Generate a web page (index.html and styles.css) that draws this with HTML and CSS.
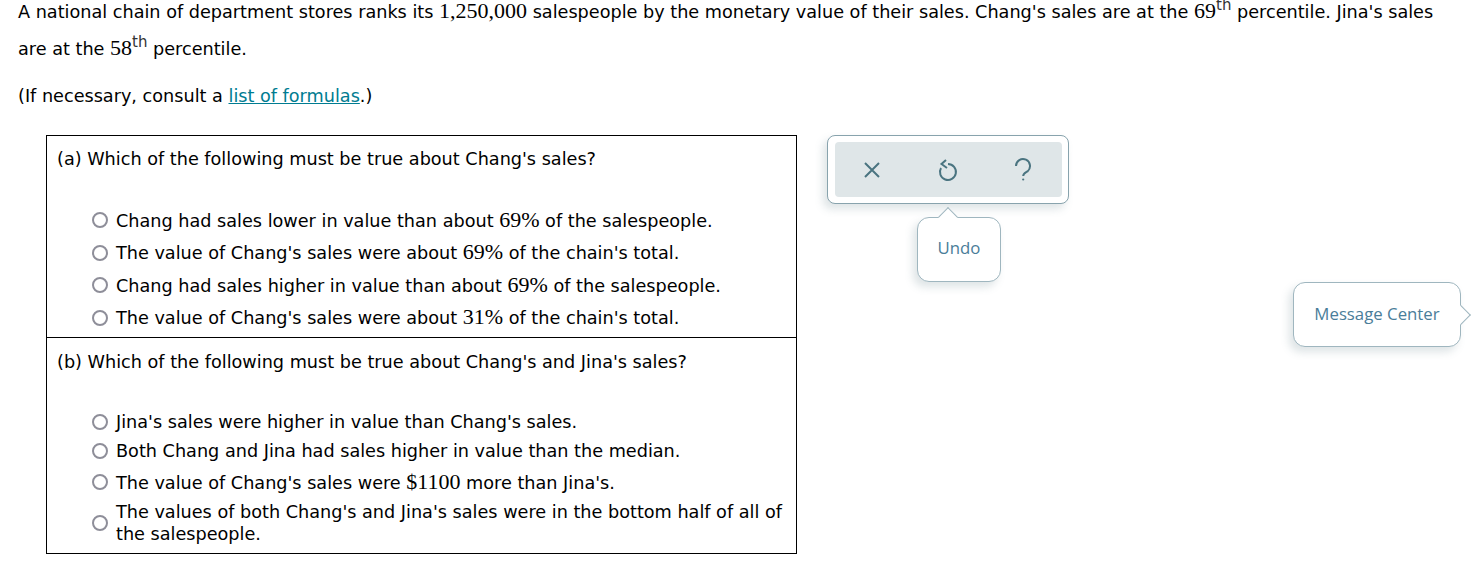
FILE: index.html
```html
<!DOCTYPE html>
<html lang="en">

<head>
    <meta charset="UTF-8">
    <title>Percentile question</title>
    <link rel="stylesheet" href="styles.css">
</head>

<body>
    <div class="question">
        <p class="stem">A national chain of department stores ranks its <span class="math">1,250,000</span> salespeople by the monetary value of their sales. Chang's sales are at the <span class="math">69<sup>th</sup></span> percentile. Jina's sales are at the <span class="math">58<sup>th</sup></span> percentile.</p>
        <p class="consult">(If necessary, consult a <a href="#">list of formulas</a>.)</p>

        <div class="parts">
            <div class="part part-a">
                <div class="prompt">(a) Which of the following must be true about Chang's sales?</div>
                <label class="choice"><input type="radio" name="a"><span>Chang had sales lower in value than about <span class="math">69%</span> of the salespeople.</span></label>
                <label class="choice"><input type="radio" name="a"><span>The value of Chang's sales were about <span class="math">69%</span> of the chain's total.</span></label>
                <label class="choice"><input type="radio" name="a"><span>Chang had sales higher in value than about <span class="math">69%</span> of the salespeople.</span></label>
                <label class="choice"><input type="radio" name="a"><span>The value of Chang's sales were about <span class="math">31%</span> of the chain's total.</span></label>
            </div>
            <div class="part part-b">
                <div class="prompt">(b) Which of the following must be true about Chang's and Jina's sales?</div>
                <label class="choice first-row"><input type="radio" name="b"><span>Jina's sales were higher in value than Chang's sales.</span></label>
                <label class="choice"><input type="radio" name="b"><span>Both Chang and Jina had sales higher in value than the median.</span></label>
                <label class="choice third-row"><input type="radio" name="b"><span>The value of Chang's sales were <span class="math">$1100</span> more than Jina's.</span></label>
                <label class="choice last-row"><input type="radio" name="b"><span>The values of both Chang's and Jina's sales were in the bottom half of all of the salespeople.</span></label>
            </div>
        </div>
    </div>

    <div class="toolbar">
        <div class="toolbar-inner">
            <svg class="icon" viewBox="0 0 24 24"><path d="M5 5l14 14M19 5L5 19"/></svg>
            <svg class="icon" viewBox="0 0 24 24"><path d="M5 10A8 8 0 1 0 12 6M10 2L5.500 6L11 10"/></svg>
            <svg class="icon" viewBox="0 0 24 24"><path d="M5 8A7 7 0 1 1 16.500 13.400C14 15 12.200 15.500 12.200 18"/><circle class="dot" cx="12.200" cy="21.500" r="1.100"/></svg>
        </div>
    </div>

    <div class="tip tip-undo">Undo</div>
    <div class="tip tip-message">Message Center</div>
</body>

</html>
```

FILE: styles.css
```css
body {
    margin: 0;
    padding: 0;
    height: 586px;
    overflow: hidden;
    background: #fff;
    color: #000;
    font-family: "DejaVu Sans", Verdana, sans-serif;
    font-size: 17.650px;
    line-height: 22px;
    position: relative;
}

.question {
    margin-top: -7px;
    padding-left: 18px;
    width: 1420px;
}

.math {
    font-family: "Liberation Serif", "Times New Roman", serif;
    font-size: 22px;
}

.math sup {
    font-family: "DejaVu Sans", Verdana, sans-serif;
    font-size: 15px;
    line-height: 0;
    color: #333;
}

.stem {
    margin: 0;
    line-height: 36px;
}

.consult {
    margin: 18px 0 0;
}

.consult a {
    color: #007c91;
    text-decoration: underline;
}

.parts {
    margin: 28px 0 0 28px;
    width: 749px;
    border: 1px solid #000;
}

.part {
    padding: 12px 10px 0;
}

.part-a {
    height: 189px;
    border-bottom: 1px solid #000;
}

.part-b {
    padding-top: 13px;
    height: 202px;
}

.prompt {
    margin-bottom: 34px;
}

.choice {
    display: flex;
    align-items: center;
    gap: 8px;
    margin-left: 35px;
    min-height: 32.500px;
}

.part-b .choice {
    min-height: 30px;
}

.part-b .first-row {
    min-height: 29px;
}

.part-b .third-row {
    margin-top: 1px;
}

.part-b .last-row {
    margin-top: 4px;
}

.choice input {
    appearance: none;
    flex: none;
    width: 16px;
    height: 16px;
    margin: 0;
    border: 2px solid #8e8e99;
    border-radius: 50%;
    background: #fff;
}

.toolbar {
    position: absolute;
    left: 827px;
    top: 135px;
    width: 242px;
    height: 69px;
    box-sizing: border-box;
    padding: 6px 6px 6px 7px;
    background: #fff;
    border: 1px solid #88a3ad;
    border-radius: 8px;
    box-shadow: -4px 5px 8px rgba(90, 120, 130, 0.2);
}

.toolbar-inner {
    height: 100%;
    display: flex;
    align-items: center;
    justify-content: space-between;
    padding: 0 27px 0 25px;
    background: #dfe6e8;
    border-radius: 4px;
}

.icon {
    width: 24px;
    height: 24px;
    fill: none;
    stroke: #4a7480;
    stroke-width: 2;
    overflow: visible;
}

.icon .dot {
    fill: #4a7480;
    stroke: none;
}

.tip {
    position: absolute;
    box-sizing: border-box;
    display: flex;
    align-items: center;
    justify-content: center;
    background: #fff;
    border: 1px solid #9fb6bf;
    border-radius: 12px;
    box-shadow: -4px 5px 8px rgba(90, 120, 130, 0.2);
    color: #4a7d99;
    font-family: "Open Sans", Lato, sans-serif;
    font-size: 16.800px;
}

.tip::after {
    content: "";
    position: absolute;
    width: 14px;
    height: 14px;
    box-sizing: border-box;
    background: #fff;
    border: 1px solid #9fb6bf;
    border-width: 1px 0 0 1px;
}

.tip-undo {
    left: 917px;
    top: 217px;
    width: 84px;
    height: 65px;
    padding-bottom: 3px;
}

.tip-undo::after {
    left: 23px;
    top: -8px;
    transform: rotate(45deg);
}

.tip-message {
    left: 1293px;
    top: 282px;
    width: 168px;
    height: 65px;
    padding-bottom: 1px;
}

.tip-message::after {
    right: -8px;
    top: 25px;
    transform: rotate(135deg);
}
```
